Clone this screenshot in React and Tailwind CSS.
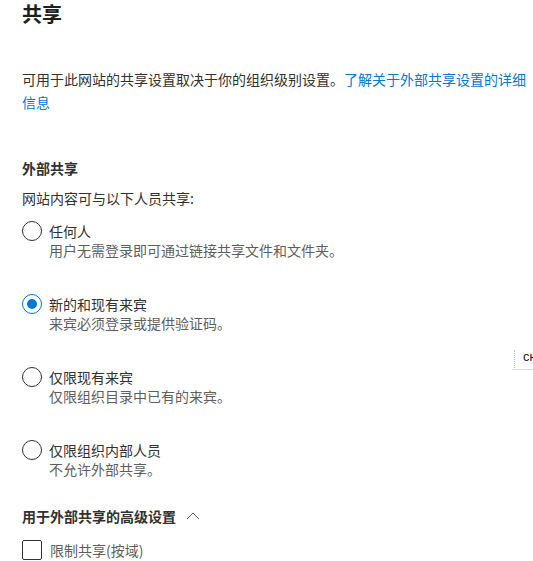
const options = [
  { label: "任何人", desc: "用户无需登录即可通过链接共享文件和文件夹。", checked: false },
  { label: "新的和现有来宾", desc: "来宾必须登录或提供验证码。", checked: true },
  { label: "仅限现有来宾", desc: "仅限组织目录中已有的来宾。", checked: false },
  { label: "仅限组织内部人员", desc: "不允许外部共享。", checked: false },
]

export default function App() {
  return (
    <div className="relative w-[533px] h-[561px] overflow-hidden bg-white text-[#323130] font-['Noto_Sans_CJK_SC',sans-serif]">
      <div className="pl-[22px] pr-[6px]">
        {/* TITLE */}
        <h1 className="text-[20px] font-bold leading-[28px] text-[#201f1e]">共享</h1>

        {/* DESCRIPTION */}
        <p className="mt-[40px] text-[14px] leading-[23px] w-[505px]">
          <span>可用于此网站的共享设置取决于你的组织级别设置。</span>
          <span className="text-[#0078d4]">了解关于外部共享设置的详细信息</span>
        </p>

        {/* EXTERNAL SHARING */}
        <h2 className="mt-[44px] text-[14px] font-bold leading-[20px]">外部共享</h2>
        <p className="mt-[10px] text-[14px] leading-[20px]">网站内容可与以下人员共享:</p>

        <div className="mt-[13px] flex flex-col gap-[34px]">
          {options.map(o => (
            <Radio key={o.label} {...o} />
          ))}
        </div>

        {/* ADVANCED */}
        <div className="mt-[27px] flex items-center gap-[10px]">
          <span className="text-[14px] font-bold leading-[20px]">用于外部共享的高级设置</span>
          <svg width="14" height="10" viewBox="0 0 14 10" fill="none">
            <path d="M1 8 L7 2 L13 8" stroke="#605e5c" strokeWidth="1" />
          </svg>
        </div>

        <div className="mt-[14px] flex items-center gap-[8px]">
          <span className="w-[20px] h-[20px] border border-[#323130] rounded-[2px] shrink-0" />
          <span className="text-[14px] leading-[20px] text-[#605e5c]">限制共享(按域)</span>
        </div>
      </div>

      {/* stray overlay at right edge */}
      <div className="absolute left-[512px] top-[348px] w-[24px] h-[22px] border-b border-[#d8d8d8]">
        <div className="absolute left-[2px] top-[2px] h-[18px] border-l border-dotted border-[#bdbdbd]" />
        <span className="absolute left-[11px] top-[4px] text-[11px] leading-[12px] font-['Liberation_Mono',monospace] text-black">
          CH
        </span>
      </div>
    </div>
  )
}

function Radio({ label, desc, checked }) {
  return (
    <div className="flex items-start gap-[7px]">
      <span
        className={
          checked
            ? "w-[20px] h-[20px] rounded-full border border-[#0078d4] flex items-center justify-center shrink-0"
            : "w-[20px] h-[20px] rounded-full border border-[#323130] shrink-0"
        }
      >
        {checked && <span className="w-[10px] h-[10px] rounded-full bg-[#0078d4]" />}
      </span>
      <div className="flex flex-col">
        <span className="text-[14px] leading-[20px]">{label}</span>
        <span className="text-[14px] leading-[19px] text-[#605e5c]">{desc}</span>
      </div>
    </div>
  )
}
